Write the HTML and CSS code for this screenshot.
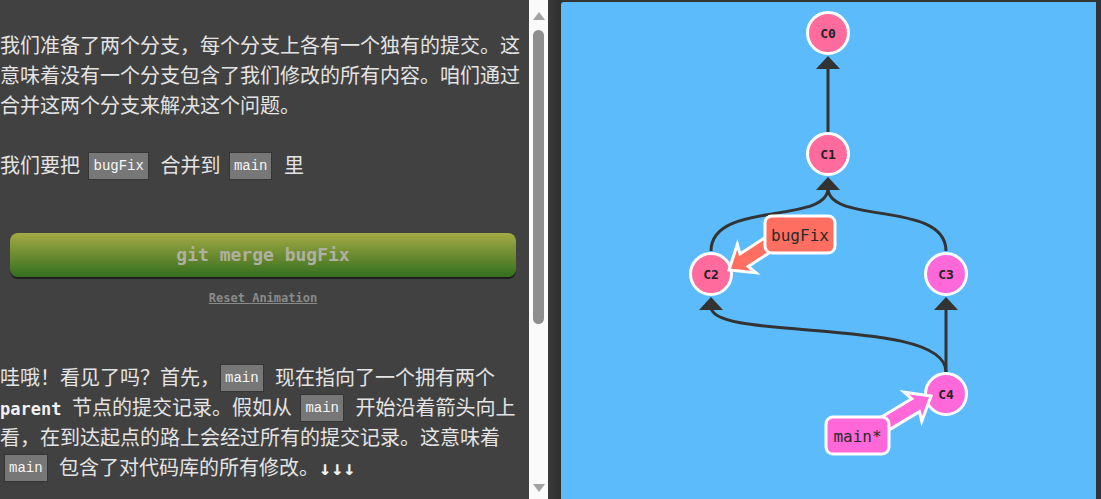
FILE: index.html
```html
<!DOCTYPE html>
<html lang="zh">
<head>
<meta charset="utf-8">
<link rel="stylesheet" href="styles.css">
</head>
<body>
<div class="app">
  <div class="dialog">
    <div class="content">
      <p class="para first">我们准备了两个分支，每个分支上各有一个独有的提交。这意味着没有一个分支包含了我们修改的所有内容。咱们通过合并这两个分支来解决这个问题。</p>
      <p class="para second">我们要把 <code class="tag">bugFix</code> 合并到 <code class="tag">main</code> 里</p>
      <div class="demo">
        <div class="cmd-btn">git merge bugFix</div>
        <a class="reset">Reset Animation</a>
      </div>
      <p class="para third">哇哦！看见了吗？首先，<code class="tag tight">main</code> 现在指向了一个拥有两个 <b class="mono">parent</b> 节点的提交记录。假如从 <code class="tag">main</code> 开始沿着箭头向上看，在到达起点的路上会经过所有的提交记录。这意味着 <code class="tag">main</code> 包含了对代码库的所有修改。<span class="arrows">↓↓↓</span></p>
    </div>
  </div>
  <div class="scrollbar">
    <div class="sb-up"></div>
    <div class="sb-thumb"></div>
    <div class="sb-down"></div>
  </div>
  <div class="gutter"></div>
  <div class="canvas">
    <svg class="graph" width="535" height="497" viewBox="561 2 535 497" xmlns="http://www.w3.org/2000/svg">
      <g class="edges" fill="none" stroke="#333" stroke-width="3">
        <path d="M828,132 L828,68"/>
        <path d="M711,251 C711,200 828,225 828,188"/>
        <path d="M946,251 C946,200 828,225 828,188"/>
        <path d="M946,372 C946,316 711,342 711,307"/>
        <path d="M946,372 L946,307"/>
      </g>
      <g class="heads" fill="#333">
        <polygon points="828,56 816,69 840,69"/>
        <polygon points="828,177 816,190 840,190"/>
        <polygon points="711,297 699,310 723,310"/>
        <polygon points="946,297 934,310 958,310"/>
      </g>
      <g class="nodes" stroke="#fff" stroke-width="3">
        <circle cx="828" cy="33" r="20.5" fill="#ff6b9c"/>
        <circle cx="828" cy="154" r="20.5" fill="#ff6b9c"/>
        <circle cx="711" cy="274" r="20.5" fill="#ff6b9c"/>
        <circle cx="946" cy="274" r="20.5" fill="#ff68d8"/>
        <circle cx="946" cy="394" r="20.5" fill="#ff68d8"/>
      </g>
      <g class="node-text">
        <text x="828" y="38">C0</text>
        <text x="828" y="159">C1</text>
        <text x="711" y="279">C2</text>
        <text x="946" y="279">C3</text>
        <text x="946" y="399">C4</text>
      </g>
      <g class="branch">
        <path transform="translate(729,270) rotate(-33)" d="M0,0 L21,-17 L18,-7.5 L52,-7.5 L52,7.5 L18,7.5 L21,17 Z" fill="#ff6f61" stroke="#fff" stroke-width="3" stroke-linejoin="miter"/>
        <rect x="765" y="216" width="70" height="37" rx="7" fill="#ff6f61" stroke="#fff" stroke-width="3"/>
        <text class="branch-text" x="800" y="241">bugFix</text>
      </g>
      <g class="branch">
        <path transform="translate(931,396) rotate(149)" d="M0,0 L21,-17 L18,-7.5 L62,-7.5 L62,7.5 L18,7.5 L21,17 Z" fill="#ff68d8" stroke="#fff" stroke-width="3" stroke-linejoin="miter"/>
        <rect x="826" y="417" width="63" height="37" rx="7" fill="#ff68d8" stroke="#fff" stroke-width="3"/>
        <text class="branch-text" x="857.5" y="442">main*</text>
      </g>
    </svg>
  </div>
  <div class="edge"></div>
</div>
</body>
</html>
```
FILE: styles.css
```css
html, body {
  margin: 0;
  padding: 0;
  height: 499px;
  overflow: hidden;
  background: #333333;
}

.app {
  display: flex;
  width: 1101px;
  height: 499px;
}

.dialog {
  width: 529px;
  height: 499px;
  background: #414141;
  overflow: hidden;
  flex: none;
}

.content {
  width: 526px;
  padding-top: 30px;
  font-family: "Noto Sans CJK SC", "Noto Sans", sans-serif;
  font-size: 20px;
  line-height: 30px;
  color: #e4e4e4;
}

.para {
  margin: 0;
}

.second {
  margin-top: 30px;
}

.third {
  margin-top: 56px;
}

.tag {
  display: inline-block;
  vertical-align: top;
  margin: 2px 7px 0 4px;
  padding: 3px 4px;
  line-height: 20px;
  font-family: "Liberation Mono", "DejaVu Sans Mono", monospace;
  font-size: 14px;
  color: #f6f6f6;
  background: #777777;
  border: 1px solid #353535;
}

.tag.tight {
  margin-left: 0;
}

.mono {
  font-family: "DejaVu Sans Mono", monospace;
  font-size: 17px;
  line-height: 20px;
  font-weight: bold;
  color: #f0f0f0;
  margin-right: 6px;
}

.arrows {
  font-family: "DejaVu Sans Mono", monospace;
  font-weight: bold;
  font-size: 20px;
  line-height: 20px;
  color: #f0f0f0;
}

.demo {
  display: flex;
  flex-direction: column;
  align-items: center;
  margin-top: 53px;
}

.cmd-btn {
  align-self: stretch;
  margin: 0 10px 0 10px;
  height: 44px;
  border-radius: 8px;
  background: linear-gradient(#a4aa44, #346e1e);
  box-shadow: 0 2px 0 #1f1f1f;
  display: flex;
  align-items: center;
  justify-content: center;
  font-family: "DejaVu Sans Mono", monospace;
  font-weight: bold;
  font-size: 18px;
  color: #b0b0a2;
}

.reset {
  margin-top: 13px;
  font-family: "DejaVu Sans Mono", monospace;
  font-weight: bold;
  font-size: 12px;
  line-height: 16px;
  color: #8a8a8a;
  text-decoration: underline;
}

.scrollbar {
  width: 19px;
  height: 499px;
  background: #fafafa;
  flex: none;
  display: flex;
  flex-direction: column;
  align-items: center;
}

.sb-up {
  margin-top: 12px;
  width: 0;
  height: 0;
  border-left: 6.5px solid transparent;
  border-right: 6.5px solid transparent;
  border-bottom: 8px solid #a3a3a3;
}

.sb-thumb {
  margin-top: 10px;
  width: 11px;
  height: 294px;
  border-radius: 6px;
  background: #8e8e8e;
}

.sb-down {
  margin-top: auto;
  margin-bottom: 7px;
  width: 0;
  height: 0;
  border-left: 6.5px solid transparent;
  border-right: 6.5px solid transparent;
  border-top: 8px solid #a3a3a3;
}

.gutter {
  width: 13px;
  height: 499px;
  flex: none;
  background: linear-gradient(to right, #3a3a3a, #2e2e2e);
}

.canvas {
  width: 535px;
  height: 497px;
  margin-top: 2px;
  flex: none;
  background: #5cbbfb;
  border-top-left-radius: 3px;
}

.graph {
  display: block;
}

.node-text text {
  font-family: "DejaVu Sans Mono", monospace;
  font-weight: bold;
  font-size: 13px;
  fill: #222;
  text-anchor: middle;
}

.branch-text {
  font-family: "DejaVu Sans Mono", monospace;
  font-size: 16px;
  fill: #2a2a2a;
  text-anchor: middle;
}

.edge {
  flex: 1;
  height: 499px;
  background: #333333;
}
```
